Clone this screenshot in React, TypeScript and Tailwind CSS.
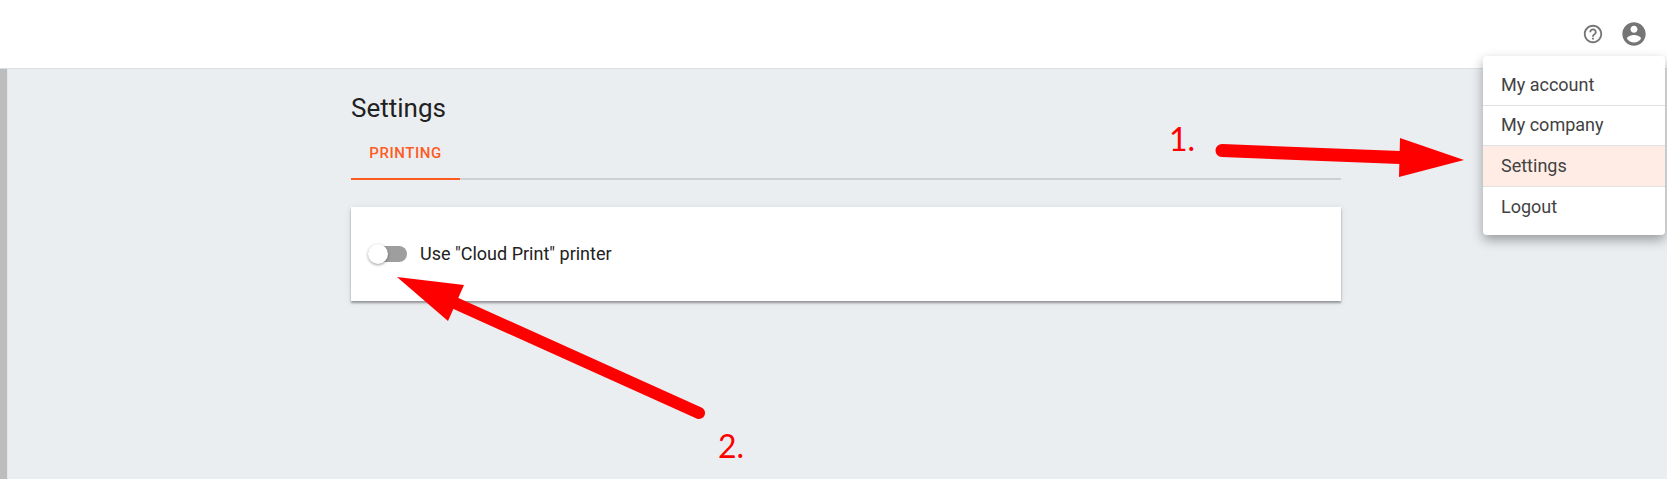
export default function App() {
  const items = ["My account", "My company", "Settings", "Logout"];
  return (
    <div className="relative h-[479px] w-[1667px] overflow-hidden bg-[#ebeef1] font-['Roboto',sans-serif]">
      <header className="flex h-[69px] items-center justify-end border-b border-[#dcdfe2] bg-white pr-[19px]">
        <div className="flex items-center gap-[16px] pb-px">
          <svg width="22" height="22" viewBox="0 0 24 24" fill="#757575">
            <path d="M11 18h2v-2h-2v2zm1-16C6.48 2 2 6.48 2 12s4.48 10 10 10 10-4.48 10-10S17.52 2 12 2zm0 18c-4.41 0-8-3.59-8-8s3.59-8 8-8 8 3.59 8 8-3.59 8-8 8zm0-14c-2.21 0-4 1.79-4 4h2c0-1.1.9-2 2-2s2 .9 2 2c0 2-3 1.75-3 5h2c0-2.25 3-2.5 3-5 0-2.21-1.79-4-4-4z" />
          </svg>
          <svg width="28" height="28" viewBox="0 0 24 24" fill="#757575">
            <path d="M12 2C6.48 2 2 6.48 2 12s4.48 10 10 10 10-4.48 10-10S17.52 2 12 2zm0 3c1.66 0 3 1.34 3 3s-1.34 3-3 3-3-1.34-3-3 1.34-3 3-3zm0 14.2c-2.5 0-4.71-1.28-6-3.22.03-1.99 4-3.08 6-3.08 1.99 0 5.97 1.09 6 3.08-1.29 1.94-3.5 3.22-6 3.22z" />
          </svg>
        </div>
      </header>
      <div className="flex h-[410px]">
        <div className="w-[8px] border-r border-[#e4e6e8] bg-[#bdbdbd]" />
        <main className="ml-[343px] w-[990px]">
          <h1 className="mt-[23px] text-[26px] leading-[32px] text-[#212121]">Settings</h1>
          <div className="mt-[9px] border-b-2 border-[#ced1d4]">
            <div className="-mb-[2px] flex h-[47px] w-[109px] items-center justify-center border-b-2 border-[#ff5a1f] pb-[4px] text-[15px] font-medium tracking-[0.55px] text-[#ff5a1f]">
              PRINTING
            </div>
          </div>
          <div className="mt-[27px] flex h-[94px] items-center bg-white pl-[16px] shadow-[0_2px_2px_rgba(0,0,0,0.35),0_1px_8px_rgba(0,0,0,0.08)]">
            <div className="relative h-[16px] w-[36px]">
              <div className="ml-[4px] h-[16px] w-[36px] rounded-full bg-[#9e9e9e]" />
              <div className="absolute left-[1px] top-[-2px] h-[20px] w-[20px] rounded-full bg-white shadow-[0_1px_3px_rgba(0,0,0,0.4)]" />
            </div>
            <span className="mb-[1px] ml-[17px] text-[18px] text-[#212121]">Use "Cloud Print" printer</span>
          </div>
        </main>
      </div>
      <div className="absolute left-[1483px] top-[56px] w-[182px] rounded-[4px] bg-white pb-[8px] pt-[9px] shadow-[0_5px_12px_rgba(0,0,0,0.35)]">
        {items.map((t, i) => (
          <div
            key={t}
            className={`flex h-[40.5px] items-center px-[18px] pb-[1px] text-[18px] text-[#424242] ${i < 3 ? "border-b border-[#e0e0e0]" : ""} ${t === "Settings" ? "bg-[#ffede5]" : ""}`}
          >
            {t}
          </div>
        ))}
      </div>
      <svg className="pointer-events-none absolute left-0 top-0" width="1667" height="479" viewBox="0 0 1667 479" fill="#ff0000">
        <path d="M1222 150.5L1400 157.5" stroke="#ff0000" strokeWidth="13" strokeLinecap="round" />
        <path d="M1400 138L1464 160L1399 177Z" />
        <path d="M456 303.5L699 413" stroke="#ff0000" strokeWidth="12" strokeLinecap="round" />
        <path d="M397 277L464 285L448 321Z" />
      </svg>
      <div className="absolute left-[1169px] top-[119px] font-['Lato',sans-serif] text-[32px] font-normal leading-[40px] text-[#ff0000]">1.</div>
      <div className="absolute left-[718px] top-[426px] font-['Lato',sans-serif] text-[32px] font-normal leading-[40px] text-[#ff0000]">2.</div>
    </div>
  );
}
